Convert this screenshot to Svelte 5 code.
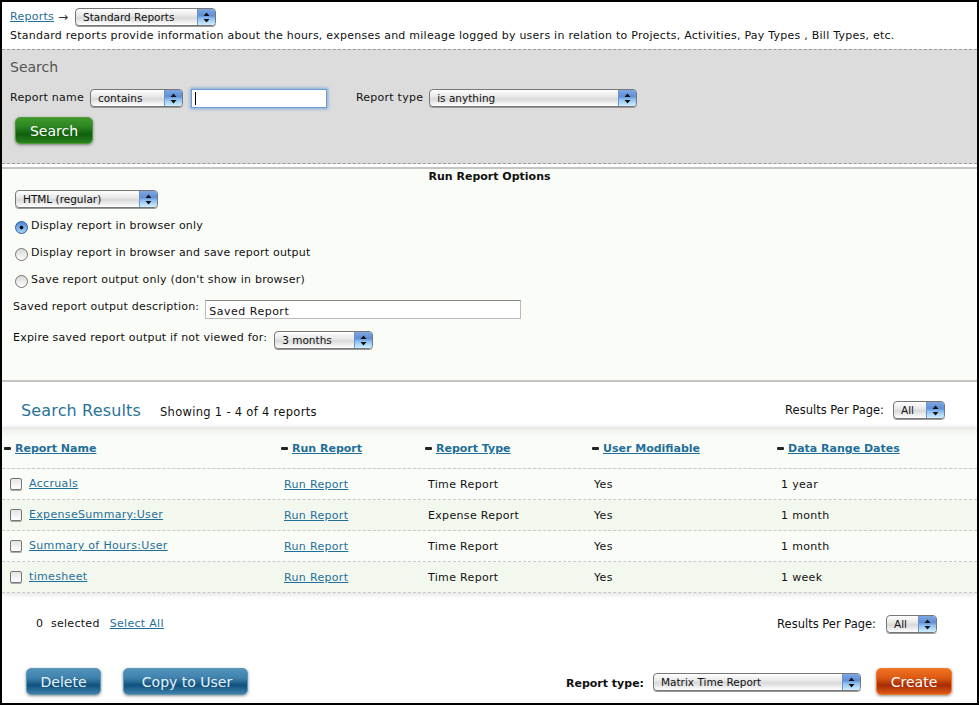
<script>
    const columns = ['Run Report', 'Report Type', 'User Modifiable', 'Data Range Dates'];
    const reports = [
        { name: 'Accruals', type: 'Time Report', range: '1 year' },
        { name: 'ExpenseSummary:User', type: 'Expense Report', range: '1 month' },
        { name: 'Summary of Hours:User', type: 'Time Report', range: '1 month' },
        { name: 'timesheet', type: 'Time Report', range: '1 week' }
    ];
    const radios = [
        'Display report in browser only',
        'Display report in browser and save report output',
        "Save report output only (don't show in browser)"
    ];
</script>

{#snippet select(label, width)}
    <span class="select" style="width: {width}px">
        <span class="select-label">{label}</span>
        <span class="select-arrows">
            <svg width="7" height="11" viewBox="0 0 7 11"><path d="M3.5 0.5 L6.5 4 H0.5 Z M3.5 10.5 L0.5 7 H6.5 Z" fill="#111" /></svg>
        </span>
    </span>
{/snippet}

<div class="page">
    <header class="intro">
        <div class="crumbs">
            <a href="#top">Reports</a>
            <span class="arrow">→</span>
            {@render select('Standard Reports', 141)}
        </div>
        <p>Standard reports provide information about the hours, expenses and mileage logged by users in relation to Projects, Activities, Pay Types , Bill Types, etc.</p>
    </header>

    <section class="search">
        <h2>Search</h2>
        <div class="search-row">
            <span class="lbl">Report name</span>
            {@render select('contains', 93)}
            <span class="focus-input"><i></i></span>
            <span class="lbl type-lbl">Report type</span>
            {@render select('is anything', 208)}
        </div>
        <button class="btn green search-btn">Search</button>
    </section>

    <section class="options">
        <h3>Run Report Options</h3>
        <div class="format">{@render select('HTML (regular)', 143)}</div>
        {#each radios as text, i}
            <div class="radio-row">
                <span class="radio" class:on={i === 0}></span>
                <span>{text}</span>
            </div>
        {/each}
        <div class="field-row">
            <span>Saved report output description:</span>
            <span class="text-input">Saved Report</span>
        </div>
        <div class="field-row expire">
            <span>Expire saved report output if not viewed for:</span>
            {@render select('3 months', 99)}
        </div>
    </section>

    <section class="results">
        <div class="results-head">
            <h2>Search Results</h2>
            <span class="showing">Showing 1 - 4 of 4 reports</span>
            <span class="per-page">Results Per Page:</span>
            {@render select('All', 52)}
        </div>

        <div class="table">
            <div class="row head">
                <div class="cell first"><i class="sort"></i><a href="#top">Report Name</a></div>
                {#each columns as col}
                    <div class="cell"><i class="sort"></i><a href="#top">{col}</a></div>
                {/each}
            </div>
            {#each reports as r, i}
                <div class="row" class:alt={i % 2 === 1}>
                    <div class="cell name"><span class="check"></span><a href="#top">{r.name}</a></div>
                    <div class="cell run"><a href="#top">Run Report</a></div>
                    <div class="cell type">{r.type}</div>
                    <div class="cell mod">Yes</div>
                    <div class="cell range">{r.range}</div>
                </div>
            {/each}
        </div>

        <div class="selection">
            <span class="count">0&nbsp; selected</span>
            <a href="#top">Select All</a>
            <span class="per-page">Results Per Page:</span>
            {@render select('All', 51)}
        </div>

        <div class="actions">
            <button class="btn blue delete">Delete</button>
            <button class="btn blue copy">Copy to User</button>
            <strong>Report type:</strong>
            {@render select('Matrix Time Report', 208)}
            <button class="btn orange create">Create</button>
        </div>
    </section>
</div>

<style>
    :global(body) {
        margin: 0;
        background: #fff;
    }

    .page {
        box-sizing: border-box;
        width: 979px;
        height: 705px;
        border: 2px solid #000;
        overflow: hidden;
        font: 11px/14px "DejaVu Sans", Verdana, sans-serif;
        letter-spacing: 0.25px;
        color: #111;
        background: #fff;
    }

    a {
        color: #1f6f99;
        text-decoration: underline;
    }

    h2, h3, p {
        margin: 0;
        font-weight: normal;
    }

    .select {
        display: inline-flex;
        box-sizing: border-box;
        height: 18px;
        flex: none;
        border: 1px solid #777;
        border-radius: 4px;
        overflow: hidden;
        background: linear-gradient(#fff 0%, #e6e6e6 45%, #d8d8d8 55%, #fff 100%);
        box-shadow: 0 1px 0 #999;
        font-size: 10.5px;
        line-height: 16px;
        letter-spacing: 0;
    }

    .select-label {
        flex: 1;
        padding-left: 7px;
        white-space: nowrap;
    }

    .select-arrows {
        display: flex;
        align-items: center;
        justify-content: center;
        width: 17px;
        border-left: 1px solid #6f93c9;
        background: linear-gradient(#7fa6e0 0%, #5f8fd8 40%, #8fc0f0 60%, #d0f0ff 100%);
    }

    .intro {
        height: 47px;
        padding: 6px 0 0 8px;
        box-sizing: border-box;
    }

    .crumbs {
        display: flex;
        align-items: center;
        height: 18px;
    }

    .arrow {
        margin: 0 7px 0 4px;
        font-size: 12px;
        letter-spacing: 0;
        color: #333;
    }

    .intro p {
        margin-top: 3px;
        white-space: nowrap;
    }

    .search {
        box-sizing: border-box;
        height: 115px;
        padding: 8px 0 0 8px;
        background: #dcdcdc;
        border-top: 1px dashed #999;
        border-bottom: 1px dashed #999;
    }

    .search h2 {
        font-size: 14px;
        line-height: 18px;
        letter-spacing: 0;
        color: #555;
    }

    .search-row {
        display: flex;
        align-items: center;
        height: 20px;
        margin-top: 12px;
    }

    .search-row .lbl {
        margin-right: 6px;
    }

    .focus-input {
        box-sizing: border-box;
        display: flex;
        align-items: center;
        width: 136px;
        height: 19px;
        margin: 0 29px 0 8px;
        padding-left: 3px;
        background: #fff;
        border: 1px solid #6d9dd2;
        box-shadow: 0 0 3px 1px #7fa8d8;
    }

    .focus-input i {
        width: 1px;
        height: 13px;
        background: #000;
    }

    .btn {
        box-sizing: border-box;
        height: 27px;
        padding: 0;
        border-radius: 5px;
        color: #fff;
        font: 14px/1 "DejaVu Sans", Verdana, sans-serif;
        box-shadow: 0 1px 3px rgba(0, 0, 0, 0.45);
    }

    .green {
        border: 1px solid #4d9a35;
        background: linear-gradient(#3f9a2c 0%, #2c8420 35%, #115f0c 65%, #2a8120 100%);
    }

    .blue {
        border: 1px solid #5c97bd;
        background: linear-gradient(#5393bb 0%, #3f82ad 35%, #0f527f 65%, #3f80aa 100%);
        color: #e8f2f8;
    }

    .orange {
        border: 1px solid #ee7a2c;
        background: linear-gradient(#f0701e 0%, #dc5a14 35%, #a82c06 65%, #dd5a16 100%);
    }

    .search-btn {
        display: block;
        width: 78px;
        margin: 9px 0 0 5px;
    }

    .options {
        box-sizing: border-box;
        height: 215px;
        margin-top: 3px;
        padding-left: 11px;
        letter-spacing: 0.22px;
        background: #fafcf8;
        border-top: 2px solid #c4c4c4;
        border-bottom: 2px solid #c4c4c4;
    }

    .options h3 {
        margin-left: -11px;
        padding-top: 1px;
        text-align: center;
        font-size: 11px;
        font-weight: bold;
        line-height: 14px;
        letter-spacing: 0;
    }

    .format {
        display: flex;
        margin: 6px 0 0 2px;
    }

    .radio-row {
        display: flex;
        gap: 3px;
        height: 27px;
        padding-left: 2px;
    }

    .format + .radio-row {
        margin-top: 11px;
    }

    .radio {
        box-sizing: border-box;
        flex: none;
        width: 13px;
        height: 13px;
        margin-top: 2px;
        border: 1px solid #777;
        border-radius: 50%;
        background: linear-gradient(#d8d8d8, #fff);
    }

    .radio.on {
        border-color: #2c5a9c;
        background: radial-gradient(circle, #111 0 1.6px, transparent 2.2px), linear-gradient(#4f86d6, #a8d4f8);
    }

    .field-row {
        display: flex;
    }

    .text-input {
        box-sizing: border-box;
        width: 316px;
        height: 19px;
        margin: 0 0 0 6px;
        padding: 3px 0 0 3px;
        line-height: 15px;
        letter-spacing: 0.5px;
        background: #fff;
        border: 1px solid #bbb;
        border-top-color: #888;
    }

    .expire {
        margin-top: 12px;
        align-items: flex-start;
    }

    .expire .select {
        margin: 0 0 0 7px;
    }

    .results-head {
        box-sizing: border-box;
        display: flex;
        align-items: center;
        height: 47px;
        padding: 11px 32px 0 19px;
    }

    .results-head h2 {
        font-size: 16px;
        letter-spacing: 0.15px;
        color: #2a7299;
    }

    .showing {
        margin-left: 19px;
        font-size: 11.5px;
        letter-spacing: 0.3px;
        position: relative;
        top: 1px;
    }

    .per-page {
        margin-left: auto;
        margin-right: 9px;
        font-size: 11.5px;
        letter-spacing: 0;
        position: relative;
        top: -1px;
    }

    .results-head :global(.select) {
        margin-top: -2px;
    }

    .table {
        box-shadow: 0 -2px 4px rgba(0, 0, 0, 0.12), 0 2px 5px rgba(0, 0, 0, 0.1);
    }

    .row {
        display: grid;
        grid-template-columns: 279px 144px 167px 185px 1fr;
        height: 31px;
        padding-top: 2px;
        align-items: center;
        letter-spacing: 0.33px;
        background: #fafcf8;
        border-bottom: 1px dashed #c8c8c8;
        box-sizing: border-box;
    }

    .row.alt {
        background: #f3f8ee;
    }

    .row.head {
        height: 40px;
        padding: 1px 0 0;
        font-weight: bold;
        letter-spacing: 0;
        background: linear-gradient(#eef1ec 0, #fafcf8 8px);
    }

    .first {
        padding-left: 2px;
    }

    .sort {
        display: inline-block;
        width: 7px;
        height: 3px;
        margin-right: 4px;
        vertical-align: 2px;
        background: #222;
        border-radius: 1px;
    }

    .name {
        display: flex;
        align-items: center;
        padding-left: 8px;
    }

    .check {
        box-sizing: border-box;
        width: 12px;
        height: 12px;
        margin: 0 7px 2px 0;
        border: 1px solid #777;
        border-radius: 2px;
        background: linear-gradient(#e4e4e4, #fff);
        box-shadow: 0 1px 0 #aaa;
    }

    .name a {
        position: relative;
        top: -1px;
    }

    .run, .type {
        padding-left: 3px;
    }

    .mod {
        padding-left: 2px;
    }

    .range {
        padding-left: 4px;
    }

    .selection {
        display: flex;
        align-items: center;
        height: 18px;
        margin-top: 22px;
        padding: 0 40px 0 34px;
        letter-spacing: 0.3px;
    }

    .selection a {
        margin-left: 10px;
    }

    .selection .per-page {
        margin-right: 10px;
        top: 0;
    }

    .actions {
        display: flex;
        align-items: center;
        height: 27px;
        margin-top: 35px;
        padding-left: 24px;
    }

    .delete {
        width: 75px;
    }

    .copy {
        width: 125px;
        margin-left: 22px;
        padding-left: 3px;
    }

    .actions strong {
        margin: 5px 9px 0 auto;
        letter-spacing: 0;
    }

    .actions .select {
        margin-top: 1px;
    }

    .create {
        width: 76px;
        margin: 0 25px 0 15px;
    }
</style>
